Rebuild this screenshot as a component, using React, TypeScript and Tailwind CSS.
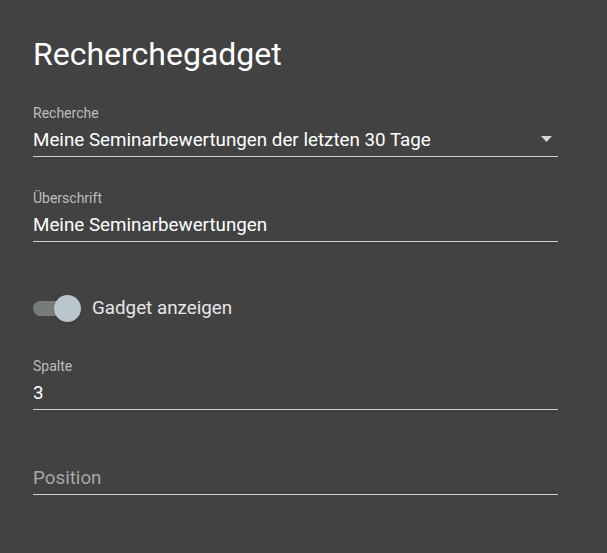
import React, { useState } from 'react';

const Field: React.FC<{ label?: string; value?: string; placeholder?: string; select?: boolean; className?: string }> = ({
  label,
  value,
  placeholder,
  select,
  className = '',
}) => (
  <div className={`w-[525px] ${className}`}>
    {label && <div className="text-[14px] leading-[16px] text-[#bdbdbd]">{label}</div>}
    <div className="flex items-center justify-between border-b border-[#cfcfcf] h-[36px] pt-[4px]">
      {value ? (
        <span className="text-[18.8px] text-white">{value}</span>
      ) : (
        <span className="text-[18.8px] text-[#a8a8a8]">{placeholder}</span>
      )}
      {select && (
        <svg width="11" height="6" viewBox="0 0 11 6" className="mr-[6px] mb-[4px]">
          <path d="M0 0 L11 0 L5.5 6 Z" fill="#d6d6d6" />
        </svg>
      )}
    </div>
  </div>
);

export default function App() {
  const [on, setOn] = useState(true);

  return (
    <div className="w-[607px] h-[553px] bg-[#424242] pl-[33px] pt-[32px]" style={{ fontFamily: 'Roboto, sans-serif' }}>
      <h1 className="text-[32px] leading-[44px] text-white">Recherchegadget</h1>

      <Field className="mt-[29px]" label="Recherche" value="Meine Seminarbewertungen der letzten 30 Tage" select />
      <Field className="mt-[33px]" label="Überschrift" value="Meine Seminarbewertungen" />

      <div className="flex items-center mt-[52px] h-[28px]">
        <button onClick={() => setOn(!on)} className="relative w-[48px] h-[28px] flex items-center">
          <span className="block w-[38px] h-[15px] rounded-full bg-[#777b7c]" />
          <span
            className={`absolute top-[0.5px] w-[27px] h-[27px] rounded-full bg-[#b9c6cc] shadow ${on ? 'left-[21px]' : 'left-0'}`}
          />
        </button>
        <span className="ml-[11px] text-[18.8px] text-[#e6e6e6]">Gadget anzeigen</span>
      </div>

      <Field className="mt-[36px]" label="Spalte" value="3" />
      <Field className="mt-[49px]" placeholder="Position" />
    </div>
  );
}
